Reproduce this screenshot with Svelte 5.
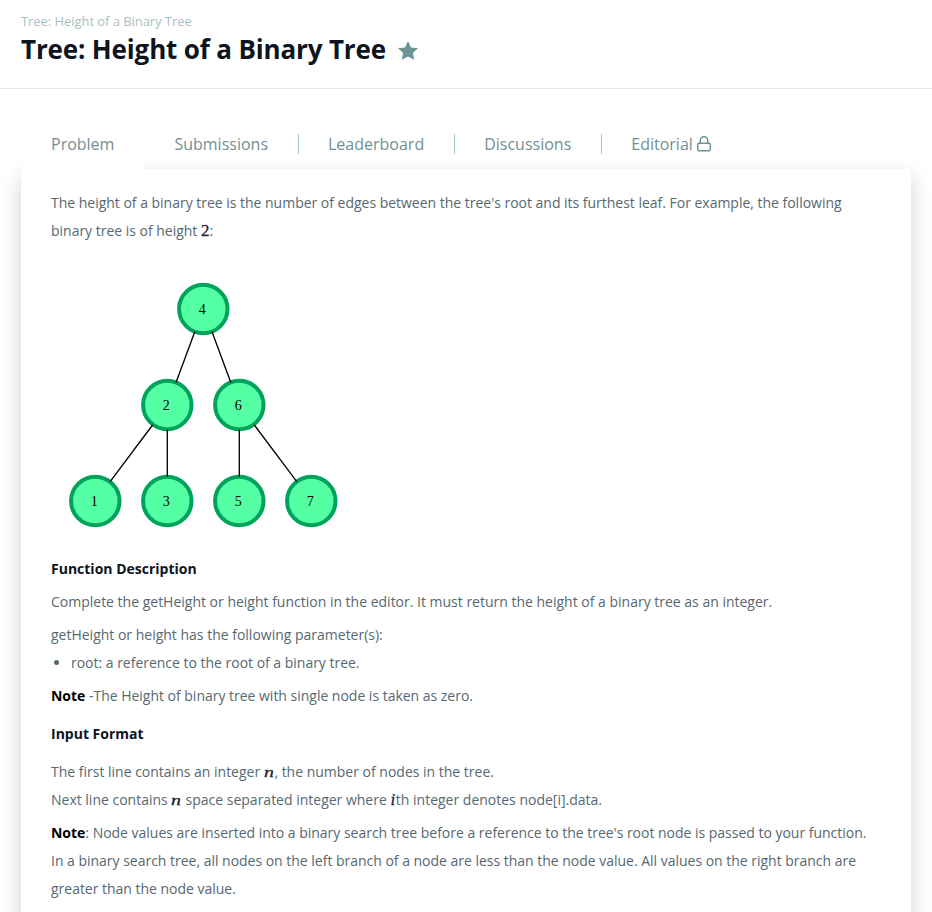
<script>
  const tabs = ['Submissions', 'Leaderboard', 'Discussions', 'Editorial'];
  const nodes = [
    { v: 4, x: 203.3, y: 309 },
    { v: 2, x: 167.3, y: 405 },
    { v: 6, x: 239.3, y: 405 },
    { v: 1, x: 95.3, y: 501 },
    { v: 3, x: 167.3, y: 501 },
    { v: 5, x: 239.3, y: 501 },
    { v: 7, x: 311.3, y: 501 }
  ];
  const edges = [
    [194.8, 331.7, 176, 382.4],
    [212, 331.7, 230.8, 382.4],
    [152.6, 425, 110.3, 481.4],
    [167.3, 429.5, 167.3, 476.8],
    [239.3, 429.5, 239.3, 476.8],
    [254.3, 425, 296.6, 481.4]
  ];
</script>

<div class="page">
  <header>
    <div class="crumb">Tree: Height of a Binary Tree</div>
    <div class="title-row">
      <h1>Tree: Height of a Binary Tree</h1>
      <svg class="star" width="20" height="19" viewBox="0 0 20 19"><path d="M10 0l3 6.400 7 .8-5.200 4.700 1.500 6.900L10 15.400 3.700 18.800l1.500-6.900L0 7.200l7-.8z" /></svg>
    </div>
  </header>

  <nav>
    <div class="tab active">Problem</div>
    {#each tabs as tab}
      <div class="tab"><span>{tab}</span>
        {#if tab === 'Editorial'}
          <svg class="lock" width="14" height="16" viewBox="0 0 14 16"><rect x=".7" y="7.200" width="12.600" height="7.600" rx="1.300" /><path d="M3.200 7V4.500a3.800 3.800 0 0 1 7.600 0V7" /></svg>
        {/if}
      </div>
    {/each}
  </nav>

  <main>
    <p>The height of a binary tree is the number of edges between the tree's root and its furthest leaf. For example, the following binary tree is of height <span class="num">2</span>:</p>
    <svg class="tree" width="300" height="300" viewBox="51 250 300 300">
      {#each nodes as n}
        <circle cx={n.x} cy={n.y} r="24" />
        <text x={n.x - 1} y={n.y + 5}>{n.v}</text>
      {/each}
      {#each edges as [x1, y1, x2, y2]}
        <line {x1} {y1} {x2} {y2} />
      {/each}
    </svg>
    <p><strong>Function Description</strong></p>
    <p class="normal">Complete the getHeight or height function in the editor. It must return the height of a binary tree as an integer.</p>
    <p class="tight normal">getHeight or height has the following parameter(s):</p>
    <ul><li>root: a reference to the root of a binary tree.</li></ul>
    <p><b>Note</b> -The Height of binary tree with single node is taken as zero.</p>
    <h2>Input Format</h2>
    <p class="normal">The first line contains an integer <i class="n">n</i>, the number of nodes in the tree.<br />Next line contains <i class="n">n</i> space separated integer where <i>i</i>th integer denotes node[i].data.</p>
    <p><b>Note</b>: Node values are inserted into a binary search tree before a reference to the tree's root node is passed to your function. In a binary search tree, all nodes on the left branch of a node are less than the node value. All values on the right branch are greater than the node value.</p>
  </main>
</div>

<style>
  :global(body) { background: #fff; }
  .page {
    height: 912px;
    overflow: hidden;
    font-family: 'Open Sans', sans-serif;
    font-size: 14px;
    line-height: 28px;
    color: #576871;
  }
  header {
    box-sizing: border-box;
    height: 89px;
    padding: 12px 21px 0;
    border-bottom: 1px solid #e7e8e8;
  }
  .crumb { font-size: 13px; line-height: 19px; letter-spacing: -0.06px; color: #a7bfbf; }
  .title-row { display: flex; align-items: center; gap: 12px; height: 36px; }
  h1 { margin: 0; font-size: 26px; line-height: 36px; font-weight: 700; letter-spacing: -0.15px; color: #0e141e; }
  .star { fill: #6c9496; margin-top: 2px; }
  nav { display: flex; padding: 30px 0 0 21px; height: 50px; }
  .tab {
    position: relative;
    display: flex;
    align-items: center;
    height: 50px;
    padding: 0 30px;
    font-size: 16px;
    color: #738f93;
  }
  .tab:not(.active):not(:last-child)::after {
    content: '';
    position: absolute;
    right: -1px;
    top: 15px;
    width: 1px;
    height: 20px;
    background: #a7c4c4;
  }
  .active { z-index: 1; background: #fff; }
  .lock { margin-left: 4px; fill: none; stroke: #6c9496; stroke-width: 1.4; }
  main {
    box-sizing: border-box;
    width: 890px;
    height: 900px;
    margin-left: 21px;
    padding: 20px 30px;
    background: #fff;
    box-shadow: 0 8px 20px rgba(0, 0, 0, 0.18);
  }
  p { margin: 0 0 5px; letter-spacing: -0.016px; }
  .normal { letter-spacing: -0.004px; }
  li { letter-spacing: -0.016px; }
  .tight { margin: 0; }
  strong, h2 { font-weight: 700; font-size: 14px; letter-spacing: 0; color: #0e141e; }
  h2 { margin: 10px 0; line-height: 28px; }
  b { font-weight: 700; color: #000; }
  ul { margin: 0 0 5px; padding-left: 20px; }
  .num, i {
    font: 17px/1 'Liberation Serif', serif;
    color: #1b2230;
    -webkit-text-stroke: 0.3px #1b2230;
  }
  i { font-style: italic; margin-right: 0.7px; }
  .n { display: inline-block; width: 10.6px; margin-right: 0; font-size: 15.5px; transform: scaleX(1.28); transform-origin: left; }
  .tree { display: block; margin-bottom: 5px; }
  circle { fill: #55ffa3; stroke: #00a35c; stroke-width: 4; r: 24.2px; }
  line { stroke: #000; stroke-width: 1.33; }
  text { font: 14px 'Liberation Serif', serif; fill: #000; text-anchor: middle; }
</style>
